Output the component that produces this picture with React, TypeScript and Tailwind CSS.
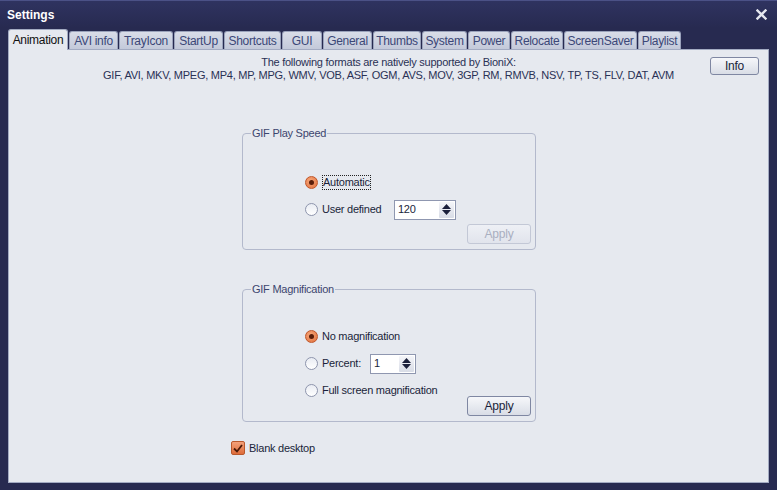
import React from "react";

const tabs = [
  { label: "Animation", w: 60 },
  { label: "AVI info", w: 50 },
  { label: "TrayIcon", w: 55 },
  { label: "StartUp", w: 50 },
  { label: "Shortcuts", w: 58 },
  { label: "GUI", w: 41 },
  { label: "General", w: 50 },
  { label: "Thumbs", w: 49 },
  { label: "System", w: 46 },
  { label: "Power", w: 43 },
  { label: "Relocate", w: 53 },
  { label: "ScreenSaver", w: 74 },
  { label: "Playlist", w: 44 },
];

function Radio({ checked }: { checked?: boolean }) {
  return checked ? (
    <span className="w-[13px] h-[13px] rounded-full border border-[#c0562a] bg-[radial-gradient(circle_at_40%_35%,#f7a679,#e0703c)] flex items-center justify-center shrink-0">
      <span className="w-[5px] h-[5px] rounded-full bg-[#5a1e0a]" />
    </span>
  ) : (
    <span className="w-[13px] h-[13px] rounded-full border border-[#8e95ad] bg-[linear-gradient(#e9ecf3,#ffffff)] shrink-0" />
  );
}

function Spin({ value, w }: { value: string; w: number }) {
  return (
    <div
      className="h-[20px] border border-[#8f97b0] bg-white flex items-center justify-between pl-[3px] pr-[1px]"
      style={{ width: w }}
    >
      <span className="text-[#1a1f3a]">{value}</span>
      <div className="w-[15px] h-[16px] bg-[linear-gradient(#f4f5f9,#d8dce6)] flex flex-col items-center justify-center gap-[1px] rounded-[1px]">
        <svg width="9" height="5" viewBox="0 0 9 5"><path d="M4.5 0L9 5H0z" fill="#1a1f3a" /></svg>
        <svg width="9" height="5" viewBox="0 0 9 5"><path d="M0 0h9L4.5 5z" fill="#1a1f3a" /></svg>
      </div>
    </div>
  );
}

function Btn({ label, disabled, w, h }: { label: string; disabled?: boolean; w: number; h: number }) {
  return (
    <div
      className={
        "rounded-[3px] border flex items-center justify-center text-[12px] " +
        (disabled
          ? "border-[#c3c8d6] bg-[linear-gradient(#eef0f5,#e1e4ec)] text-[#a9afc0]"
          : "border-[#7f87a2] bg-[linear-gradient(#f6f7fa,#d9dde6)] text-[#1a1f3a]")
      }
      style={{ width: w, height: h }}
    >
      {label}
    </div>
  );
}

export default function App() {
  return (
    <div
      className="w-[777px] h-[490px] bg-[#272a50] text-[11px] tracking-[-0.25px] text-[#1a1f3a] flex flex-col overflow-hidden"
      style={{ fontFamily: '"Liberation Sans", Arial, sans-serif' }}
    >
      {/* title bar */}
      <div className="h-[28px] shrink-0 border-t border-[#4b5186] bg-[linear-gradient(#2f3360,#272a50)] flex items-center justify-between pl-[7px] pr-[10px]">
        <span className="text-white font-bold text-[12px] tracking-normal">Settings</span>
        <svg width="11" height="11" viewBox="0 0 11 11">
          <path d="M1.5 1.5l8 8M9.5 1.5l-8 8" stroke="#e6e8f0" strokeWidth="2.4" strokeLinecap="square" />
        </svg>
      </div>
      {/* tabs */}
      <div className="flex items-end h-[21px] pl-[8px] shrink-0 relative z-10">
        {tabs.map((t, i) =>
          i === 0 ? (
            <div
              key={t.label}
              className="h-[21px] mb-[-1px] bg-[#e6e9ef] border border-b-0 border-[#a3abc2] rounded-t-[3px] flex items-center justify-center text-[#111] text-[12px] tracking-[-0.3px]"
              style={{ width: t.w }}
            >
              {t.label}
            </div>
          ) : (
            <div
              key={t.label}
              className="h-[18px] bg-[linear-gradient(#d9dde8,#c3c9da)] border border-b-0 border-[#9aa2bb] rounded-t-[3px] flex items-center justify-center text-[#3b4777] text-[12px] tracking-[-0.3px] ml-[1px]"
              style={{ width: t.w - 1 }}
            >
              {t.label}
            </div>
          )
        )}
      </div>
      {/* panel */}
      <div className="ml-[8px] mr-[8px] h-[434px] bg-[#e6e9ef] border border-[#a3abc2] relative flex flex-col">
        <div className="flex pt-[6px]">
          <div className="w-[58px] shrink-0" />
          <div className="flex-1 flex flex-col items-center leading-[13px] text-[#2a3155]">
            <span>The following formats are natively supported by BioniX:</span>
            <span>GIF, AVI, MKV, MPEG, MP4, MP, MPG, WMV, VOB, ASF, OGM, AVS, MOV, 3GP, RM, RMVB, NSV, TP, TS, FLV, DAT, AVM</span>
          </div>
          <div className="w-[58px] shrink-0 pt-[1px]">
            <Btn label="Info" w={49} h={18} />
          </div>
        </div>

        {/* group 1 */}
        <fieldset className="ml-[233px] mt-[43px] w-[294px] h-[125px] border border-[#b3b9cc] rounded-[4px] px-0 pb-0 relative">
          <legend className="ml-[8px] px-[1px] text-[#3c456e]">GIF Play Speed</legend>
          <div className="flex flex-col pl-[62px] pt-[34px]">
            <div className="flex items-center gap-[4px] h-[14px]">
              <Radio checked />
              <span className="border border-dotted border-[#222] leading-[13px]">Automatic</span>
            </div>
            <div className="flex items-center mt-[10px]">
              <Radio />
              <span className="ml-[4px] w-[72px]">User defined</span>
              <Spin value="120" w={62} />
            </div>
            <div className="flex justify-end pr-[4px] mt-[4px]">
              <Btn label="Apply" w={64} h={20} disabled />
            </div>
          </div>
        </fieldset>

        {/* group 2 */}
        <fieldset className="ml-[233px] mt-[31px] w-[294px] h-[141px] border border-[#b3b9cc] rounded-[4px] px-0 pb-0 relative">
          <legend className="ml-[8px] px-[1px] text-[#3c456e]">GIF Magnification</legend>
          <div className="flex flex-col pl-[62px] pt-[32px]">
            <div className="flex items-center gap-[4px] h-[14px]">
              <Radio checked />
              <span>No magnification</span>
            </div>
            <div className="flex items-center mt-[10px]">
              <Radio />
              <span className="ml-[4px] w-[48px]">Percent:</span>
              <Spin value="1" w={46} />
            </div>
            <div className="flex items-center gap-[4px] mt-[10px] h-[14px]">
              <Radio />
              <span>Full screen magnification</span>
            </div>
            <div className="flex justify-end pr-[4px] mt-[-2px]">
              <Btn label="Apply" w={64} h={20} />
            </div>
          </div>
        </fieldset>

        <div className="flex items-center ml-[222px] mt-[18px] gap-[4px]">
          <span className="w-[14px] h-[14px] rounded-[2px] border border-[#b9582c] bg-[linear-gradient(#f3a17a,#de6c3a)] flex items-center justify-center">
            <svg width="10" height="9" viewBox="0 0 10 9"><path d="M1 4.5l3 3L9 1" stroke="#4a1a08" strokeWidth="1.8" fill="none" /></svg>
          </span>
          <span>Blank desktop</span>
        </div>
      </div>
    </div>
  );
}
